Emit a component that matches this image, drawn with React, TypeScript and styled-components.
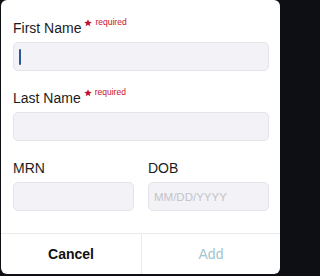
import React from "react";
import styled, { createGlobalStyle } from "styled-components";

const GlobalStyle = createGlobalStyle`
  html, body {
    margin: 0;
    padding: 0;
    background: #0e0f14;
  }
  * {
    box-sizing: border-box;
  }
`;

const Card = styled.div`
  width: 279px;
  height: 274px;
  margin: 0 2px 2px 1px;
  background: #ffffff;
  border-radius: 6px;
  display: flex;
  flex-direction: column;
  overflow: hidden;
  font-family: "Liberation Sans", Arial, sans-serif;
  color: #1c1c1e;
`;

const Form = styled.form`
  flex: 1;
  display: flex;
  flex-direction: column;
  gap: 19px;
  padding: 20px 11px 0 12px;
`;

const Field = styled.div`
  display: flex;
  flex-direction: column;
  gap: 5px;
  min-width: 0;
`;

const Row = styled.div`
  display: grid;
  grid-template-columns: 1fr 1fr;
  gap: 14px;
`;

const Label = styled.label`
  display: flex;
  align-items: flex-start;
  font-size: 14px;
  line-height: 17px;
  height: 17px;
  white-space: nowrap;
`;

const Required = styled.span`
  display: inline-flex;
  align-items: center;
  gap: 3px;
  margin-left: 3px;
  margin-top: -2px;
  font-size: 8.5px;
  line-height: 9px;
  color: #c8102e;
`;

const Box = styled.div`
  height: 29px;
  display: flex;
  align-items: center;
  padding: 0 5px;
  background: #f3f2f6;
  border: 1px solid #e4e3e9;
  border-radius: 5px;
`;

const Input = styled.input`
  flex: 1;
  min-width: 0;
  border: none;
  outline: none;
  background: transparent;
  padding: 0;
  font-family: inherit;
  font-size: 11.5px;
  color: #1c1c1e;

  &::placeholder {
    color: #c4c4ca;
  }
`;

const Caret = styled.span`
  width: 2px;
  height: 16px;
  background: #2c5896;
  border-radius: 1px;
`;

const Footer = styled.div`
  height: 41px;
  display: grid;
  grid-template-columns: 140px 1fr;
  border-top: 1px solid #ebebed;
`;

const FooterButton = styled.button<{ $primary?: boolean }>`
  border: none;
  background: transparent;
  padding: 0;
  font-family: inherit;
  font-size: 14px;
  font-weight: ${(p) => (p.$primary ? 400 : 700)};
  color: ${(p) => (p.$primary ? "#a3c6cb" : "#111111")};
  border-left: ${(p) => (p.$primary ? "1px solid #ebebed" : "none")};
  cursor: pointer;
`;

const Star = () => (
  <svg width="8" height="8" viewBox="0 0 24 23">
    <path
      d="M12 0l3.1 7.6 8.2.6-6.3 5.3 2 8-7-4.4-7 4.4 2-8L.7 8.2l8.2-.6z"
      fill="#c8102e"
    />
  </svg>
);

const RequiredMark = () => (
  <Required>
    <Star />
    required
  </Required>
);

export default function App() {
  return (
    <>
      <GlobalStyle />
      <Card>
        <Form onSubmit={(e) => e.preventDefault()}>
          <Field>
            <Label>
              First Name
              <RequiredMark />
            </Label>
            <Box>
              <Caret />
            </Box>
          </Field>
          <Field>
            <Label>
              Last Name
              <RequiredMark />
            </Label>
            <Box>
              <Input readOnly />
            </Box>
          </Field>
          <Row>
            <Field>
              <Label>MRN</Label>
              <Box>
                <Input readOnly />
              </Box>
            </Field>
            <Field>
              <Label>DOB</Label>
              <Box>
                <Input readOnly placeholder="MM/DD/YYYY" />
              </Box>
            </Field>
          </Row>
        </Form>
        <Footer>
          <FooterButton type="button">Cancel</FooterButton>
          <FooterButton type="button" $primary>
            Add
          </FooterButton>
        </Footer>
      </Card>
    </>
  );
}
